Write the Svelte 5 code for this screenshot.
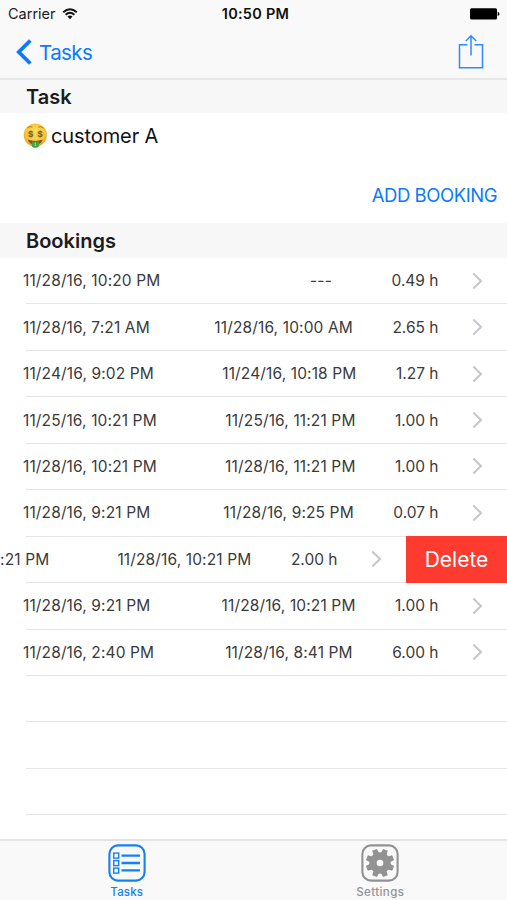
<script>
    const bookings = [
        { start: '11/28/16, 10:20 PM', end: '---', hours: '0.49 h' },
        { start: '11/28/16, 7:21 AM', end: '11/28/16, 10:00 AM', hours: '2.65 h' },
        { start: '11/24/16, 9:02 PM', end: '11/24/16, 10:18 PM', hours: '1.27 h' },
        { start: '11/25/16, 10:21 PM', end: '11/25/16, 11:21 PM', hours: '1.00 h' },
        { start: '11/28/16, 10:21 PM', end: '11/28/16, 11:21 PM', hours: '1.00 h' },
        { start: '11/28/16, 9:21 PM', end: '11/28/16, 9:25 PM', hours: '0.07 h' },
        { start: '11/28/16, 8:21 PM', end: '11/28/16, 10:21 PM', hours: '2.00 h' },
        { start: '11/28/16, 9:21 PM', end: '11/28/16, 10:21 PM', hours: '1.00 h' },
        { start: '11/28/16, 2:40 PM', end: '11/28/16, 8:41 PM', hours: '6.00 h' }
    ];
    const emptyRows = [0, 1, 2];

    let swiped = $state(6);

    function remove() {
        swiped = -1;
    }
</script>

<div class="screen">
    <header>
        <div class="status">
            <div class="carrier">
                <span>Carrier</span>
                <svg width="16" height="12" viewBox="0 0 16 12" fill="none" stroke="#111" stroke-width="1.9">
                    <path d="M1.2 4.2Q8 -1.9 14.8 4.2" />
                    <path d="M3.6 6.8Q8 2.8 12.4 6.8" />
                    <path d="M5.5 8.6Q8 6.5 10.5 8.6L8 11.2Z" fill="#111" stroke="none" />
                </svg>
            </div>
            <span class="clock">10:50 PM</span>
            <svg class="battery" width="31" height="12" viewBox="0 0 31 12">
                <rect x="1" y="0.2" width="27" height="11.4" rx="1.5" />
                <path d="M28.7 3.8Q30.5 4.5 30.5 5.9T28.7 8Z" />
            </svg>
        </div>
        <nav>
            <button class="back">
                <svg width="16" height="26" viewBox="0 0 16 26" fill="none" stroke="#0a7aff" stroke-width="3.8">
                    <path d="M14.3 1.5L2.8 13L14.3 24.5" />
                </svg>
                <span>Tasks</span>
            </button>
            <button class="share" aria-label="Share">
                <svg width="26" height="36" viewBox="0 0 26 36" fill="none" stroke="#2c8cff" stroke-width="1.5">
                    <path d="M9.5 10.8H1.5V33.8H24.5V10.8H16.5" />
                    <path d="M13 21.5V1.8M7.8 7L13 1.8L18.2 7" />
                </svg>
            </button>
        </nav>
    </header>

    <main>
        <h2 class="first">Task</h2>
        <section class="task">
            <div class="name">
                <svg width="25" height="25" viewBox="0 0 25 25">
                    <defs>
                        <radialGradient id="face" cx="50%" cy="40%" r="60%">
                            <stop offset="0" stop-color="#ffe25c" />
                            <stop offset="0.7" stop-color="#fcc337" />
                            <stop offset="1" stop-color="#ee9b23" />
                        </radialGradient>
                    </defs>
                    <circle cx="12.3" cy="12" r="11.6" fill="url(#face)" />
                    <path d="M4.3 5.1Q6.8 2.6 9.4 4.2M15.2 4.2Q18 2.6 20.4 5.1" fill="none" stroke="#b9781e" stroke-width="1" />
                    <circle cx="7.6" cy="11.2" r="3.8" fill="#edc14a" />
                    <circle cx="17" cy="11.2" r="3.8" fill="#edc14a" />
                    <g class="dollar">
                        <text x="7.6" y="14">$</text>
                        <text x="17" y="14">$</text>
                    </g>
                    <path d="M4.8 16.6Q12.3 19.5 19.8 16.6Q18 22 12.3 22T4.8 16.6Z" fill="#84501c" />
                    <path d="M8.7 18.2Q12.3 19.2 16 18.2V22.5Q15.8 24.8 12.3 24.8T8.7 22.5Z" fill="#46a344" />
                    <path d="M12.3 19.5V23" stroke="#a9d989" stroke-width="1" />
                </svg>
                <span>customer A</span>
            </div>
            <button class="add">ADD BOOKING</button>
        </section>

        <h2>Bookings</h2>
        <ul>
            {#each bookings as booking, i}
                <li class:swiped={swiped === i}>
                    <div class="booking">
                        <span class="start">{booking.start}</span>
                        <span class="end">{booking.end}</span>
                        <span class="hours">{booking.hours}</span>
                        <svg class="chevron" width="11" height="18" viewBox="0 0 11 18" fill="none" stroke="#c7c7cc" stroke-width="2.1">
                            <path d="M1.3 1.5L9 9L1.3 16.5" />
                        </svg>
                    </div>
                    {#if swiped === i}
                        <button class="delete" onclick={remove}>Delete</button>
                    {/if}
                </li>
            {/each}
            {#each emptyRows as row}
                <li></li>
            {/each}
        </ul>
    </main>

    <footer>
        <button class="tab active">
            <svg width="38" height="38" viewBox="0 0 38 38" fill="none" stroke="currentColor">
                <rect x="1.4" y="1.4" width="35.2" height="35.2" rx="8.5" stroke-width="2.1" />
                <g stroke-width="1.4">
                    <rect x="5.7" y="9.1" width="5" height="5" />
                    <rect x="5.7" y="16.6" width="5" height="5" />
                    <rect x="5.7" y="24.1" width="5" height="5" />
                </g>
                <path d="M13.5 11.6H32M13.5 19H32M13.5 26.4H32" stroke-width="2.3" />
            </svg>
            <span>Tasks</span>
        </button>
        <button class="tab">
            <svg width="38" height="38" viewBox="0 0 38 38" fill="none" stroke="currentColor">
                <rect x="1.4" y="1.4" width="35.2" height="35.2" rx="8.5" stroke-width="2.1" />
                <circle cx="19" cy="19" r="7" stroke-width="7.4" />
                <g fill="currentColor" stroke="none">
                    {#each [0, 45, 90, 135, 180, 225, 270, 315] as angle}
                        <path d="M15.8 11L16.5 4.8H21.5L22.2 11Z" transform="rotate({angle + 22.5} 19 19)" />
                    {/each}
                </g>
            </svg>
            <span>Settings</span>
        </button>
    </footer>
</div>

<style>
    :global(body) {
        background: #fff;
    }
    .screen {
        display: flex;
        flex-direction: column;
        width: 507px;
        height: 900px;
        overflow: hidden;
        color: #1c1c1e;
        font-family: Inter, "Liberation Sans", sans-serif;
    }
    button {
        padding: 0;
        border: 0;
        background: none;
        color: #0a7aff;
        font-family: inherit;
        cursor: pointer;
    }
    svg {
        display: block;
        flex: none;
    }
    header {
        flex: none;
        box-sizing: border-box;
        height: 80px;
        background: #f9f9f9;
        border-bottom: 2px solid #e6e7e8;
    }
    .status {
        display: grid;
        grid-template-columns: 1fr auto 1fr;
        align-items: center;
        height: 27px;
        padding: 0 7px 0 8px;
        font-size: 14.5px;
    }
    .carrier {
        display: flex;
        align-items: center;
        gap: 6px;
    }
    .clock {
        padding-left: 3px;
        color: #111;
        font-weight: 600;
        letter-spacing: 0.25px;
    }
    .battery {
        justify-self: end;
    }
    nav {
        display: flex;
        justify-content: space-between;
        align-items: center;
        height: 50px;
        padding: 0 23px 0 16px;
    }
    .back {
        display: flex;
        align-items: center;
        gap: 7px;
        font-size: 20.5px;
        letter-spacing: -0.6px;
    }
    h2 {
        flex: none;
        box-sizing: border-box;
        height: 35px;
        margin: 0;
        padding-left: 26px;
        background: #f7f7f7;
        font-size: 20px;
        font-weight: 600;
        line-height: 36px;
    }
    h2.first {
        height: 33px;
        line-height: 34px;
    }
    .task {
        display: flex;
        flex-direction: column;
        justify-content: space-between;
        box-sizing: border-box;
        height: 110px;
        padding: 10px 10px 17px 23px;
    }
    .name {
        display: flex;
        align-items: center;
        gap: 3px;
        color: #111;
        font-size: 20px;
        letter-spacing: -0.1px;
    }
    .dollar {
        fill: #66641f;
        font-size: 8px;
        font-weight: 700;
        text-anchor: middle;
    }
    .add {
        align-self: flex-end;
        font-size: 18.5px;
        letter-spacing: -0.45px;
    }
    ul {
        margin: 0;
        padding: 0;
        list-style: none;
    }
    li {
        position: relative;
        display: flex;
        height: 46.45px;
    }
    li::after {
        content: "";
        position: absolute;
        right: 0;
        bottom: 0;
        left: 26px;
        height: 1px;
        background: #e5e5e7;
    }
    .booking {
        display: flex;
        flex: none;
        align-items: center;
        box-sizing: border-box;
        width: 507px;
        padding: 0 24px 1px 23px;
        color: #3a3a3c;
        font-size: 15.5px;
        white-space: nowrap;
    }
    .swiped .booking {
        margin-left: -101px;
    }
    .start,
    .end {
        letter-spacing: 0.13px;
    }
    .end {
        min-width: 62px;
        margin-right: 39.5px;
        margin-left: auto;
        text-align: center;
    }
    .hours {
        margin-right: 33.5px;
    }
    .delete {
        z-index: 1;
        flex: 1;
        margin-top: -1px;
        background: #ff3b30;
        color: #fff;
        font-size: 21px;
    }
    footer {
        display: flex;
        flex: none;
        box-sizing: border-box;
        height: 61px;
        margin-top: auto;
        background: #f9f9f9;
        border-top: 2px solid #e3e3e4;
    }
    .tab {
        display: flex;
        flex: 1;
        flex-direction: column;
        align-items: center;
        padding-top: 3px;
        color: #929292;
        font-size: 11.5px;
        font-weight: 500;
        letter-spacing: 0.4px;
    }
    .tab span {
        margin-top: 3px;
    }
    .tab.active {
        color: #1480f5;
        letter-spacing: 0.15px;
    }
</style>
